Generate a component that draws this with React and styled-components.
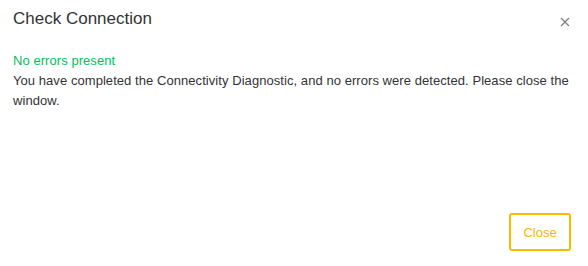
import styled, { createGlobalStyle } from "styled-components";

const GlobalStyle = createGlobalStyle`
  html, body {
    margin: 0;
    padding: 0;
    background: #fff;
  }
  * {
    box-sizing: border-box;
  }
`;

const Modal = styled.div`
  display: flex;
  flex-direction: column;
  height: 100vh;
  background: #fff;
  font-family: "Liberation Sans", Arial, Helvetica, sans-serif;
  color: #333;
`;
const Header = styled.div`
  display: flex;
  align-items: center;
  justify-content: space-between;
  padding: 9px 17px 0 13px;
`;
const Title = styled.h2`
  margin: 0;
  font-size: 17px;
  line-height: 20px;
  font-weight: normal;
  color: #333;
`;
const CloseIcon = styled.button`
  display: flex;
  align-items: center;
  justify-content: center;
  width: 12px;
  height: 12px;
  padding: 0;
  margin-top: 6px;
  border: none;
  background: none;
  color: #777;
  cursor: pointer;
`;
const Body = styled.div`
  padding: 22px 13px 0 13px;
  font-size: 13px;
  line-height: 20px;
  letter-spacing: 0.06px;
`;
const Status = styled.div`
  color: ${(p) => (p.ok ? "#00c05a" : "#e53935")};
`;
const Message = styled.p`
  margin: 0;
  color: #333;
`;
const Footer = styled.div`
  display: flex;
  justify-content: flex-end;
  margin-top: auto;
  padding: 0 17px 15px 0;
`;
const Button = styled.button`
  width: 62px;
  height: 38px;
  border: 2px solid #fcb900;
  border-radius: 3px;
  background: #fff;
  color: #f7b500;
  font-family: inherit;
  font-size: 13px;
  font-weight: 500;
  cursor: pointer;
`;

export default function App() {
  return (
    <>
      <GlobalStyle />
      <Modal>
        <Header>
          <Title>Check Connection</Title>
          <CloseIcon aria-label="close">
            <svg width="10" height="10" viewBox="0 0 10 10">
              <path d="M1 1L9 9M9 1L1 9" stroke="currentColor" strokeWidth="1.1" />
            </svg>
          </CloseIcon>
        </Header>
        <Body>
          <Status ok>No errors present</Status>
          <Message>
            You have completed the Connectivity Diagnostic, and no errors were
            detected. Please close the window.
          </Message>
        </Body>
        <Footer>
          <Button>Close</Button>
        </Footer>
      </Modal>
    </>
  );
}
